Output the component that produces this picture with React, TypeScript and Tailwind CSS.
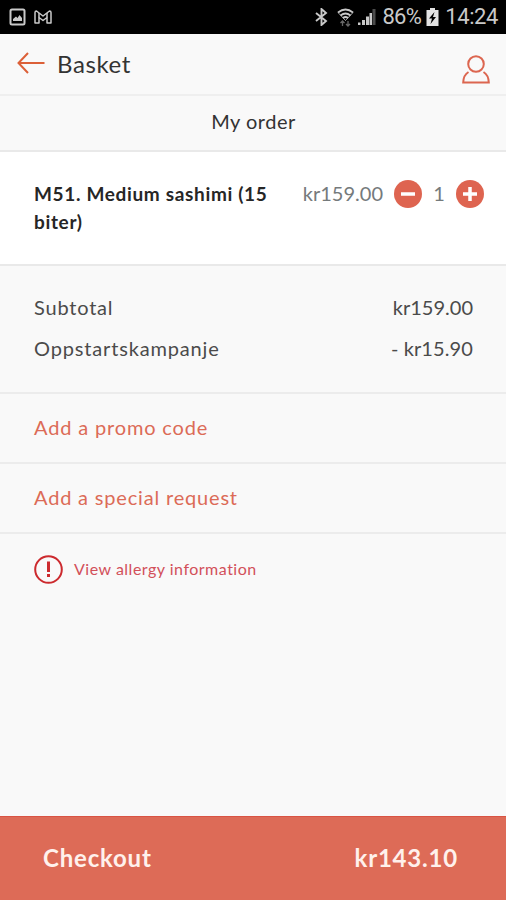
import { useState } from "react";

function StatusBar() {
  return (
    <div className="flex h-[34px] items-center justify-between bg-black pl-[9px] pr-[9px] text-[#c9c9c9]">
      <div className="flex items-center gap-[8px]">
        <svg width="17" height="18" viewBox="0 0 17 18" fill="none">
          <rect x="1.5" y="1.5" width="14" height="15" rx="1.5" stroke="currentColor" strokeWidth="2" />
          <path d="M4 13v-2l3-2.5 1.5 1.5 2-3L13 10v3z" fill="currentColor" />
        </svg>
        <svg width="18" height="14" viewBox="0 0 18 14" fill="none" stroke="currentColor" strokeWidth="1.5" strokeLinejoin="round">
          <path d="M1 2.5Q1 1 2.5 1L9 6l6.5-5Q17 1 17 2.5V13h-4V7.5L9 10.5 5 7.5V13H1z" />
          <path d="M5 3v4.5M13 3v4.5" />
        </svg>
      </div>

      <div className="flex items-center">
        <svg className="mr-[9px]" width="13" height="18" viewBox="0 0 13 18" fill="none" stroke="currentColor" strokeWidth="1.9">
          <path d="M1 5l10 8-4.5 4V1L11 5 1 13" />
        </svg>
        <svg className="mr-[4px]" width="17" height="19" viewBox="0 0 17 19" fill="none" stroke="currentColor" strokeWidth="1.7">
          <path d="M1 4.5Q8.5-1.5 16 4.5M3.500 7.5q5-4 10 0M6 10q2.500-2 5 0" />
          <path d="M1 4.5L8.5 12.5 16 4.5" strokeWidth="0.8" />
          <path d="M5.500 18v-5M3.500 15l2-2 2 2M11 13v5M9 16l2 2 2-2" stroke="#666" strokeWidth="1.3" />
        </svg>
        <svg className="mr-[6px]" width="18" height="18" viewBox="0 0 18 18" fill="currentColor">
          <path d="M0 14.5h2.5V17H0zM4 12h3v5H4zM8 8.5h3V17H8z" />
          <path d="M11.5 5H14v12h-2.5z" />
          <path d="M14.5 1h3v16h-3z" fill="#4a4a4a" />
        </svg>
        <span className="font-[Roboto,sans-serif] text-[22px] leading-none tracking-[-0.7px]">86%</span>
        <svg className="ml-[5px] mr-[6px]" width="13" height="18" viewBox="0 0 13 18">
          <path d="M4 0h5v2h3.5v16H.5V2H4z" fill="#e2e2e2" />
          <path d="M8.5 4L3 10.5h3L4.5 16l5.5-7H7z" fill="#000" />
        </svg>
        <span className="-mr-px font-[Roboto,sans-serif] text-[22px] leading-none tracking-[-0.4px]">14:24</span>
      </div>
    </div>
  );
}

function Header() {
  return (
    <header className="flex h-[62px] items-center border-b-2 border-[#efefef] pl-[17px] pr-[16px]">
      <button className="-mt-[2px]" aria-label="Back">
        <svg width="28" height="22" viewBox="0 0 28 22" fill="none" stroke="#dc6038" strokeWidth="2">
          <path d="M11 1L1.5 11 11 21M1.5 11h26" />
        </svg>
      </button>
      <h1 className="ml-[12px] text-[24px] tracking-[0.6px] text-[#333]">Basket</h1>
      <button className="mt-[10px] ml-auto" aria-label="Account">
        <svg width="28" height="29" viewBox="0 0 28 29" fill="none" stroke="#dc6650" strokeWidth="2">
          <circle cx="14" cy="9" r="7.8" />
          <path d="M6.5 17Q1.5 20 1.2 27.5H26.8Q26.5 20 21.5 17" />
        </svg>
      </button>
    </header>
  );
}

export default function App() {
  const [quantity, setQuantity] = useState(1);

  return (
    <div className="flex h-screen w-full flex-col bg-[#f9f9f9] font-[Lato,sans-serif]">
      <StatusBar />
      <Header />

      <h2 className="flex h-[56px] items-center justify-center border-b-2 border-[#e9e9e9] pb-[4px] pl-px text-[20px] tracking-[0.5px] text-[#333]">
        My order
      </h2>

      {/* Order item */}
      <div className="flex h-[114px] items-start border-b-2 border-[#e9e9e9] bg-white pl-[34px] pr-[22px] pt-[27px]">
        <p className="w-[250px] pt-px text-[19px] font-bold leading-[28px] tracking-[0.66px] text-[#262626]">
          M51. Medium sashimi (15 biter)
        </p>
        <div className="ml-auto flex h-[30px] items-center">
          <span className="pb-[2px] text-[20px] text-[#757a7c]">kr159.00</span>
          <button className="ml-[11px]" aria-label="Remove one" onClick={() => setQuantity(Math.max(0, quantity - 1))}>
            <svg width="28" height="28" viewBox="0 0 28 28">
              <circle cx="14" cy="14" r="14" fill="#de6450" />
              <path d="M7 14h14" stroke="#fff" strokeWidth="3.5" />
            </svg>
          </button>
          <span className="w-[34px] pb-[2px] text-center text-[20px] text-[#757a7c]">{quantity}</span>
          <button aria-label="Add one" onClick={() => setQuantity(quantity + 1)}>
            <svg width="28" height="28" viewBox="0 0 28 28">
              <circle cx="14" cy="14" r="14" fill="#de6450" />
              <path d="M7 14h14M14 7v14" stroke="#fff" strokeWidth="3.5" />
            </svg>
          </button>
        </div>
      </div>

      {/* Totals */}
      <div className="h-[128px] border-b-2 border-[#ececec] pl-[34px] pr-[33px] pt-[20px] text-[20px] text-[#4b4b4b]">
        <div className="flex h-[41px] items-center justify-between">
          <span className="tracking-[0.8px]">Subtotal</span>
          <span>kr159.00</span>
        </div>
        <div className="flex h-[41px] items-center justify-between">
          <span className="tracking-[0.84px]">Oppstartskampanje</span>
          <span className="tracking-[0.1px]">- kr15.90</span>
        </div>
      </div>

      <button className="h-[70px] border-b-2 border-[#ececec] pb-[3px] pl-[34px] text-left text-[20px] tracking-[0.84px] text-[#dc6b57]">
        Add a promo code
      </button>
      <button className="h-[70px] border-b-2 border-[#ececec] pb-[3px] pl-[34px] text-left text-[20px] tracking-[0.82px] text-[#dc6b57]">
        Add a special request
      </button>

      <button className="flex h-[70px] items-center pl-[34px] text-[16px] tracking-[0.5px] text-[#d2505a]">
        <svg className="mr-[11px]" width="29" height="29" viewBox="0 0 29 29" fill="none" stroke="#cc2a2e">
          <circle cx="14.5" cy="14.5" r="13.3" strokeWidth="2" />
          <path d="M14.5 6.5V17M14.5 19v3" strokeWidth="3" />
        </svg>
        <span className="pb-px">View allergy information</span>
      </button>

      <button className="mt-auto flex h-[84px] items-center justify-between border-t border-[#d95444] bg-[#dd6b57] pb-[2px] pl-[43px] pr-[48px] text-[24px] font-bold tracking-[0.8px] text-[#fff1ec]">
        <span>Checkout</span>
        <span>kr143.10</span>
      </button>
    </div>
  );
}
